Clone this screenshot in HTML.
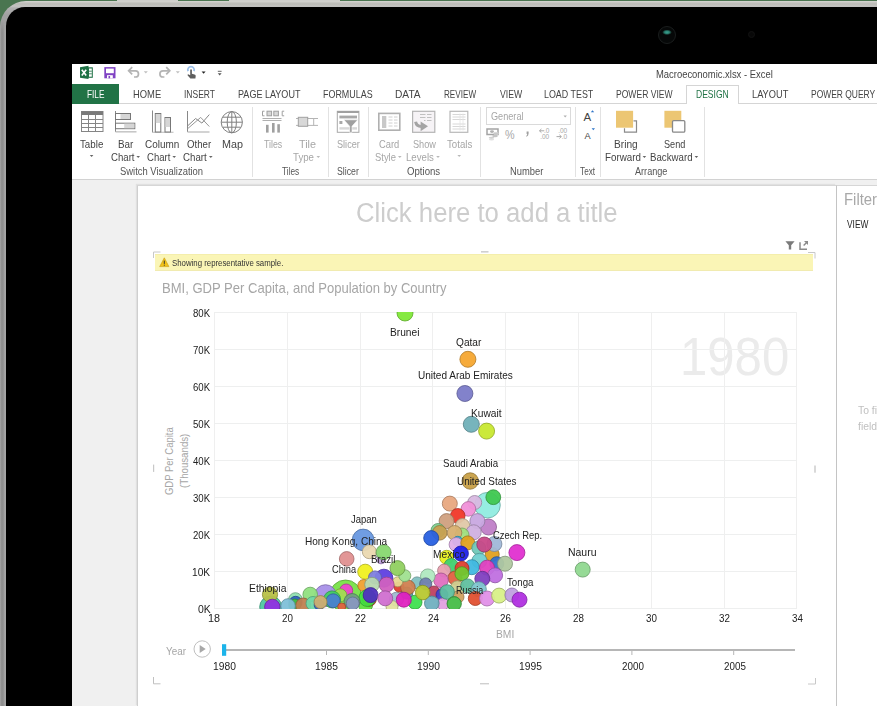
<!DOCTYPE html>
<html><head><meta charset="utf-8">
<style>
*{margin:0;padding:0;box-sizing:border-box}
html,body{width:877px;height:706px;overflow:hidden;background:#4a7550;font-family:"Liberation Sans",sans-serif}
.a{position:absolute}
.t{position:absolute;white-space:nowrap;transform-origin:0 0;font-family:"Liberation Sans",sans-serif}
#frame{left:0;top:1px;width:1000px;height:900px;border-radius:26px;background:linear-gradient(180deg,#d2d2ce 0,#d0d0cc 1px,#bebeba 2px,#bdbdb9 4px,#c6c6c4 5px,#b0b0b0 7px,#a0a0a0 14px)}
#fleft{left:0;top:20px;width:7px;height:690px;-webkit-mask-image:linear-gradient(180deg,transparent 0,#000 12px);background:linear-gradient(90deg,#a6a6a6 0,#909090 1.5px,#8e8e8e 3px,#a8a8a8 5px,#a0a0a0 6px)}
#bezel{left:6px;top:7px;width:1000px;height:900px;border-radius:19px;background:#000}
.sep{position:absolute;top:107px;width:1px;height:70px;background:#e2e2e2}
.gv{position:absolute;top:312px;width:1px;height:297px;background:#efefef}
.gh{position:absolute;left:214px;width:583px;height:1px;background:#eeefef}
.dd{position:absolute;width:0;height:0;border-left:2.5px solid transparent;border-right:2.5px solid transparent;border-top:3px solid #666}
.dd.dis{border-top-color:#b0b0b0}
.cm{position:absolute;border-color:#c8c8c8;border-style:solid;border-width:0}
</style></head>
<body>
<div id="frame" class="a"></div>
<div id="fleft" class="a"></div>
<div class="a" style="left:117px;top:0;width:61px;height:1px;background:#cfcfcc"></div>
<div class="a" style="left:229px;top:0;width:111px;height:1px;background:#cfcfcc"></div>
<div id="bezel" class="a"></div>
<div class="a" style="left:658px;top:26px;width:18px;height:18px;border-radius:50%;border:1px solid #1a1d1d;background:radial-gradient(ellipse 30% 17% at 50% 33%,#3aa090 0,#2a8070 50%,rgba(10,20,20,0) 100%),#060808"></div>
<div class="a" style="left:748px;top:31px;width:7px;height:7px;border-radius:50%;background:#080808;border:1px solid #121212"></div>

<!-- screen -->
<div class="a" style="left:72px;top:64px;width:805px;height:642px;background:#fff"></div>
<!-- FILE tab -->
<div class="a" style="left:72px;top:84px;width:47px;height:20px;background:#217346"></div>
<!-- tab bar bottom line -->
<div class="a" style="left:119px;top:103px;width:758px;height:1px;background:#d5d5d5"></div>
<!-- DESIGN tab -->
<div class="a" style="left:686px;top:85px;width:53px;height:19px;border:1px solid #d5d5d5;border-bottom:none;background:#fff"></div>
<!-- ribbon bottom -->
<div class="a" style="left:72px;top:179px;width:805px;height:1px;background:#d2d2d2"></div>
<!-- gray area -->
<div class="a" style="left:72px;top:180px;width:805px;height:526px;background:#f0f0f0"></div>
<!-- canvas -->
<div class="a" style="left:137px;top:185px;width:699px;height:521px;background:#fff;border-left:1px solid #cfcfcf;border-top:1px solid #d6d6d6;box-shadow:-1px -1px 1px #e0e0e0"></div>
<!-- filter pane -->
<div class="a" style="left:836px;top:185px;width:41px;height:521px;background:#fff;border-left:1px solid #c4c4c4;border-top:1px solid #d6d6d6"></div>

<!-- separators -->
<div class="sep" style="left:252px"></div>
<div class="sep" style="left:328px"></div>
<div class="sep" style="left:368px"></div>
<div class="sep" style="left:480px"></div>
<div class="sep" style="left:575px"></div>
<div class="sep" style="left:600px"></div>
<div class="sep" style="left:704px"></div>


<!-- yellow bar -->
<div class="a" style="left:155px;top:254px;width:658px;height:17px;background:#faf5b6;border-top:1px solid #f4eeac;border-bottom:1px solid #f1ebb0"></div>

<!-- gridlines -->
<div class='t' style='left:680.40px;top:329.55px;font-size:53px;line-height:53px;color:#ebebeb;font-weight:400;transform:scaleX(0.9259);'>1980</div>
<div class='gv' style='left:213.9px'></div>
<div class='gv' style='left:286.7px'></div>
<div class='gv' style='left:359.5px'></div>
<div class='gv' style='left:432.3px'></div>
<div class='gv' style='left:505.1px'></div>
<div class='gv' style='left:577.9px'></div>
<div class='gv' style='left:650.7px'></div>
<div class='gv' style='left:723.5px'></div>
<div class='gv' style='left:796.3px'></div>
<div class='gh' style='top:311.7px'></div>
<div class='gh' style='top:348.8px'></div>
<div class='gh' style='top:385.8px'></div>
<div class='gh' style='top:422.8px'></div>
<div class='gh' style='top:459.9px'></div>
<div class='gh' style='top:496.9px'></div>
<div class='gh' style='top:534.0px'></div>
<div class='gh' style='top:571.0px'></div>
<div class='gh' style='top:608.1px'></div>

<svg class="a" style="left:0;top:0" width="877" height="706" viewBox="0 0 877 706"><defs><clipPath id="pc"><rect x="214" y="312" width="583" height="297"/></clipPath></defs><g clip-path="url(#pc)" stroke-width="0.8">
<circle cx="345.5" cy="596.0" r="16.0" fill="#78e048" fill-opacity="0.95" stroke="#56a133"/>
<circle cx="487.5" cy="505.2" r="12.8" fill="#90ece0" fill-opacity="0.95" stroke="#67a9a1"/>
<circle cx="325.5" cy="595.7" r="11.0" fill="#a890e8" fill-opacity="0.95" stroke="#7867a7"/>
<circle cx="270.7" cy="607.0" r="11.0" fill="#50c8a0" fill-opacity="0.95" stroke="#399073"/>
<circle cx="363.1" cy="539.9" r="10.8" fill="#6898e0" fill-opacity="0.95" stroke="#4a6da1"/>
<circle cx="405.0" cy="313.0" r="8.0" fill="#80e838" fill-opacity="0.95" stroke="#5ca728"/>
<circle cx="467.9" cy="359.3" r="8.0" fill="#f5a630" fill-opacity="0.95" stroke="#b07722"/>
<circle cx="464.9" cy="393.5" r="8.0" fill="#7b7bc8" fill-opacity="0.95" stroke="#585890"/>
<circle cx="471.3" cy="424.3" r="8.0" fill="#70b0b8" fill-opacity="0.95" stroke="#507e84"/>
<circle cx="486.6" cy="431.1" r="8.0" fill="#c8e830" fill-opacity="0.95" stroke="#90a722"/>
<circle cx="470.2" cy="481.0" r="8.2" fill="#c8a048" fill-opacity="0.95" stroke="#907333"/>
<circle cx="582.7" cy="569.6" r="7.5" fill="#90d890" fill-opacity="0.95" stroke="#679b67"/>
<circle cx="493.3" cy="497.2" r="7.4" fill="#40c850" fill-opacity="0.95" stroke="#2e9039"/>
<circle cx="474.7" cy="502.5" r="7.0" fill="#d8b8e0" fill-opacity="0.95" stroke="#9b84a1"/>
<circle cx="468.4" cy="508.9" r="7.3" fill="#f090d8" fill-opacity="0.95" stroke="#ac679b"/>
<circle cx="449.8" cy="503.6" r="7.5" fill="#e8a880" fill-opacity="0.95" stroke="#a7785c"/>
<circle cx="457.7" cy="515.8" r="7.3" fill="#f03828" fill-opacity="0.95" stroke="#ac281c"/>
<circle cx="446.6" cy="521.1" r="7.5" fill="#d0a080" fill-opacity="0.95" stroke="#95735c"/>
<circle cx="488.5" cy="527.0" r="8.0" fill="#c080c8" fill-opacity="0.95" stroke="#8a5c90"/>
<circle cx="477.4" cy="521.1" r="7.5" fill="#c8a8e0" fill-opacity="0.95" stroke="#9078a1"/>
<circle cx="462.5" cy="525.9" r="7.3" fill="#e0c8a8" fill-opacity="0.95" stroke="#a19078"/>
<circle cx="473.7" cy="532.3" r="7.5" fill="#d0b0e0" fill-opacity="0.95" stroke="#957ea1"/>
<circle cx="438.0" cy="530.5" r="7.0" fill="#80d090" fill-opacity="0.95" stroke="#5c9567"/>
<circle cx="462.0" cy="535.0" r="7.0" fill="#a0e080" fill-opacity="0.95" stroke="#73a15c"/>
<circle cx="439.7" cy="532.8" r="7.3" fill="#c8a050" fill-opacity="0.95" stroke="#907339"/>
<circle cx="454.5" cy="532.8" r="7.3" fill="#d8b070" fill-opacity="0.95" stroke="#9b7e50"/>
<circle cx="431.2" cy="538.1" r="7.5" fill="#2860e0" fill-opacity="0.95" stroke="#1c45a1"/>
<circle cx="457.7" cy="541.3" r="5.0" fill="#30b0e0" fill-opacity="0.95" stroke="#227ea1"/>
<circle cx="456.1" cy="544.5" r="7.0" fill="#e0b0e8" fill-opacity="0.95" stroke="#a17ea7"/>
<circle cx="467.8" cy="542.9" r="7.0" fill="#e0a020" fill-opacity="0.95" stroke="#a17317"/>
<circle cx="492.2" cy="554.4" r="7.0" fill="#e0a020" fill-opacity="0.95" stroke="#a17317"/>
<circle cx="478.8" cy="548.0" r="7.0" fill="#70c8b8" fill-opacity="0.95" stroke="#509084"/>
<circle cx="494.4" cy="544.0" r="7.5" fill="#a0b8d8" fill-opacity="0.95" stroke="#73849b"/>
<circle cx="484.3" cy="544.5" r="7.5" fill="#c84888" fill-opacity="0.95" stroke="#903361"/>
<circle cx="516.9" cy="552.6" r="8.0" fill="#e030d0" fill-opacity="0.95" stroke="#a12295"/>
<circle cx="446.6" cy="557.3" r="7.0" fill="#e8f020" fill-opacity="0.95" stroke="#a7ac17"/>
<circle cx="460.9" cy="553.5" r="7.5" fill="#2020e8" fill-opacity="0.95" stroke="#1717a7"/>
<circle cx="479.4" cy="560.8" r="7.5" fill="#70d0d0" fill-opacity="0.95" stroke="#509595"/>
<circle cx="471.8" cy="567.2" r="7.5" fill="#40b8e0" fill-opacity="0.95" stroke="#2e84a1"/>
<circle cx="451.2" cy="565.5" r="7.0" fill="#40d070" fill-opacity="0.95" stroke="#2e9550"/>
<circle cx="444.1" cy="570.6" r="6.5" fill="#e8a0b0" fill-opacity="0.95" stroke="#a7737e"/>
<circle cx="455.0" cy="578.0" r="7.0" fill="#e06040" fill-opacity="0.95" stroke="#a1452e"/>
<circle cx="462.0" cy="568.3" r="7.0" fill="#e04030" fill-opacity="0.95" stroke="#a12e22"/>
<circle cx="461.9" cy="573.7" r="7.0" fill="#70c830" fill-opacity="0.95" stroke="#509022"/>
<circle cx="496.8" cy="563.7" r="7.0" fill="#3070d0" fill-opacity="0.95" stroke="#225095"/>
<circle cx="505.0" cy="563.7" r="7.5" fill="#b0c8a0" fill-opacity="0.95" stroke="#7e9073"/>
<circle cx="487.0" cy="567.7" r="7.5" fill="#e040c0" fill-opacity="0.95" stroke="#a12e8a"/>
<circle cx="495.1" cy="575.3" r="7.5" fill="#c070e0" fill-opacity="0.95" stroke="#8a50a1"/>
<circle cx="482.3" cy="578.8" r="7.5" fill="#8040c0" fill-opacity="0.95" stroke="#5c2e8a"/>
<circle cx="441.0" cy="580.3" r="7.3" fill="#e070c0" fill-opacity="0.95" stroke="#a1508a"/>
<circle cx="427.8" cy="576.2" r="7.3" fill="#b0e8c0" fill-opacity="0.95" stroke="#7ea78a"/>
<circle cx="417.0" cy="582.9" r="6.0" fill="#80c0c0" fill-opacity="0.95" stroke="#5c8a8a"/>
<circle cx="425.7" cy="583.9" r="6.0" fill="#7080b0" fill-opacity="0.95" stroke="#505c7e"/>
<circle cx="433.9" cy="592.0" r="6.0" fill="#c04060" fill-opacity="0.95" stroke="#8a2e45"/>
<circle cx="442.0" cy="594.6" r="6.0" fill="#4040d0" fill-opacity="0.95" stroke="#2e2e95"/>
<circle cx="457.4" cy="587.8" r="7.0" fill="#d0d090" fill-opacity="0.95" stroke="#959567"/>
<circle cx="467.6" cy="585.9" r="7.0" fill="#60c0a0" fill-opacity="0.95" stroke="#458a73"/>
<circle cx="443.0" cy="604.0" r="6.0" fill="#e0a0e0" fill-opacity="0.95" stroke="#a173a1"/>
<circle cx="458.0" cy="597.0" r="6.0" fill="#d0a060" fill-opacity="0.95" stroke="#957345"/>
<circle cx="447.1" cy="592.0" r="7.3" fill="#60c0a0" fill-opacity="0.95" stroke="#458a73"/>
<circle cx="478.8" cy="589.2" r="7.5" fill="#80c8d0" fill-opacity="0.95" stroke="#5c9095"/>
<circle cx="475.3" cy="598.5" r="7.0" fill="#e05030" fill-opacity="0.95" stroke="#a13922"/>
<circle cx="487.0" cy="598.5" r="7.5" fill="#e090e8" fill-opacity="0.95" stroke="#a167a7"/>
<circle cx="499.1" cy="595.6" r="7.5" fill="#d8f088" fill-opacity="0.95" stroke="#9bac61"/>
<circle cx="511.9" cy="595.0" r="7.0" fill="#c0a0e0" fill-opacity="0.95" stroke="#8a73a1"/>
<circle cx="519.5" cy="599.7" r="7.5" fill="#b030e0" fill-opacity="0.95" stroke="#7e22a1"/>
<circle cx="454.0" cy="603.6" r="7.0" fill="#40c060" fill-opacity="0.95" stroke="#2e8a45"/>
<circle cx="454.3" cy="603.8" r="7.0" fill="#50c050" fill-opacity="0.95" stroke="#398a39"/>
<circle cx="431.8" cy="603.3" r="7.3" fill="#70b0c0" fill-opacity="0.95" stroke="#507e8a"/>
<circle cx="415.0" cy="602.2" r="7.0" fill="#40e050" fill-opacity="0.95" stroke="#2ea139"/>
<circle cx="396.6" cy="599.2" r="7.0" fill="#a0b8d0" fill-opacity="0.95" stroke="#738495"/>
<circle cx="392.0" cy="606.5" r="6.0" fill="#e0e0a0" fill-opacity="0.95" stroke="#a1a173"/>
<circle cx="406.8" cy="593.0" r="6.0" fill="#50a0a8" fill-opacity="0.95" stroke="#397378"/>
<circle cx="422.7" cy="592.6" r="7.3" fill="#b8c830" fill-opacity="0.95" stroke="#849022"/>
<circle cx="399.0" cy="587.0" r="5.0" fill="#e04030" fill-opacity="0.95" stroke="#a12e22"/>
<circle cx="407.9" cy="587.4" r="7.3" fill="#d08050" fill-opacity="0.95" stroke="#955c39"/>
<circle cx="397.7" cy="581.8" r="5.0" fill="#e8d890" fill-opacity="0.95" stroke="#a79b67"/>
<circle cx="404.8" cy="575.7" r="6.0" fill="#a0e090" fill-opacity="0.95" stroke="#73a167"/>
<circle cx="397.5" cy="568.1" r="7.5" fill="#90d060" fill-opacity="0.95" stroke="#679545"/>
<circle cx="369.3" cy="551.7" r="7.0" fill="#ead8b0" fill-opacity="0.95" stroke="#a89b7e"/>
<circle cx="381.0" cy="559.9" r="4.0" fill="#c0a0e0" fill-opacity="0.95" stroke="#8a73a1"/>
<circle cx="383.6" cy="552.2" r="7.5" fill="#88d870" fill-opacity="0.95" stroke="#619b50"/>
<circle cx="346.7" cy="558.9" r="7.3" fill="#e09090" fill-opacity="0.95" stroke="#a16767"/>
<circle cx="365.2" cy="571.7" r="7.5" fill="#f0f020" fill-opacity="0.95" stroke="#acac17"/>
<circle cx="383.9" cy="578.2" r="9.0" fill="#6040e0" fill-opacity="0.95" stroke="#452ea1"/>
<circle cx="375.0" cy="577.4" r="6.5" fill="#8080e0" fill-opacity="0.95" stroke="#5c5ca1"/>
<circle cx="386.6" cy="584.6" r="7.5" fill="#d060c0" fill-opacity="0.95" stroke="#95458a"/>
<circle cx="363.8" cy="585.5" r="6.0" fill="#f0a030" fill-opacity="0.95" stroke="#ac7322"/>
<circle cx="372.0" cy="584.6" r="7.3" fill="#b8d8b0" fill-opacity="0.95" stroke="#849b7e"/>
<circle cx="365.6" cy="605.0" r="7.0" fill="#60e040" fill-opacity="0.95" stroke="#45a12e"/>
<circle cx="369.3" cy="599.2" r="7.0" fill="#e03030" fill-opacity="0.95" stroke="#a12222"/>
<circle cx="367.4" cy="598.0" r="8.5" fill="#40e040" fill-opacity="0.95" stroke="#2ea12e"/>
<circle cx="370.6" cy="595.1" r="7.5" fill="#5030c0" fill-opacity="0.95" stroke="#39228a"/>
<circle cx="385.2" cy="598.3" r="7.5" fill="#d070d0" fill-opacity="0.95" stroke="#955095"/>
<circle cx="346.2" cy="590.5" r="6.5" fill="#f040d0" fill-opacity="0.95" stroke="#ac2e95"/>
<circle cx="340.4" cy="595.3" r="6.5" fill="#a0e050" fill-opacity="0.95" stroke="#73a139"/>
<circle cx="332.1" cy="599.4" r="8.5" fill="#40d060" fill-opacity="0.95" stroke="#2e9545"/>
<circle cx="333.2" cy="600.8" r="7.0" fill="#4a80d0" fill-opacity="0.95" stroke="#355c95"/>
<circle cx="352.0" cy="601.5" r="8.0" fill="#70a080" fill-opacity="0.95" stroke="#50735c"/>
<circle cx="352.7" cy="603.5" r="6.5" fill="#8898c0" fill-opacity="0.95" stroke="#616d8a"/>
<circle cx="341.7" cy="606.9" r="4.0" fill="#e06040" fill-opacity="0.95" stroke="#a1452e"/>
<circle cx="310.2" cy="594.5" r="7.3" fill="#90e080" fill-opacity="0.95" stroke="#67a15c"/>
<circle cx="295.4" cy="599.5" r="6.8" fill="#90e0b0" fill-opacity="0.95" stroke="#67a17e"/>
<circle cx="295.6" cy="602.8" r="6.5" fill="#3060c0" fill-opacity="0.95" stroke="#22458a"/>
<circle cx="294.7" cy="605.0" r="6.0" fill="#40c040" fill-opacity="0.95" stroke="#2e8a2e"/>
<circle cx="303.2" cy="605.5" r="7.5" fill="#c08050" fill-opacity="0.95" stroke="#8a5c39"/>
<circle cx="313.0" cy="603.5" r="7.0" fill="#70d8a8" fill-opacity="0.95" stroke="#509b78"/>
<circle cx="319.2" cy="605.0" r="5.0" fill="#3060d0" fill-opacity="0.95" stroke="#224595"/>
<circle cx="320.5" cy="602.1" r="6.5" fill="#d0b070" fill-opacity="0.95" stroke="#957e50"/>
<circle cx="288.0" cy="606.0" r="7.3" fill="#80c0d8" fill-opacity="0.95" stroke="#5c8a9b"/>
<circle cx="270.0" cy="594.6" r="7.6" fill="#b8c048" fill-opacity="0.95" stroke="#848a33"/>
<circle cx="272.3" cy="606.9" r="7.7" fill="#9030e0" fill-opacity="0.95" stroke="#6722a1"/>
<circle cx="403.8" cy="599.7" r="7.5" fill="#e020c0" fill-opacity="0.95" stroke="#a1178a"/>
</g></svg>
<svg class="a" style="left:0;top:0" width="877" height="706" viewBox="0 0 877 706">
<!-- excel logo -->
<path d="M80 67.2 L88.5 65.8 L88.5 79 L80 77.8 Z" fill="#1e7145"/>
<rect x="88" y="67.3" width="4.8" height="10.5" fill="#1e7145"/>
<rect x="89" y="68.5" width="2.8" height="8.2" fill="#fff"/>
<path d="M89 71.2h2.8M89 73.8h2.8" stroke="#1e7145" stroke-width="0.8"/>
<path d="M81.8 69.8 L86.2 75.6 M86.2 69.8 L81.8 75.6" stroke="#fff" stroke-width="1.6"/>
<!-- save -->
<rect x="104.3" y="67.1" width="11.2" height="11.2" fill="#8043c4"/>
<rect x="106" y="68.6" width="7.8" height="4.6" fill="#fff"/>
<rect x="107" y="75.2" width="5.8" height="3.1" fill="#fff"/>
<rect x="108.5" y="76" width="1.6" height="2.3" fill="#8043c4"/>
<!-- undo -->
<path d="M129 70.8 H135.4 A3.1 3.1 0 0 1 135.4 77 H134" fill="none" stroke="#b4b4b4" stroke-width="1.7"/>
<path d="M132.2 67.2 L128.6 70.8 L132.2 74.4" fill="none" stroke="#b4b4b4" stroke-width="1.7"/>
<path d="M143.8 71.2h4l-2 2.2z" fill="#c0c0c0"/>
<!-- redo -->
<path d="M169.4 70.8 H163 A3.1 3.1 0 0 0 163 77 H164.4" fill="none" stroke="#b4b4b4" stroke-width="1.7"/>
<path d="M166.2 67.2 L169.8 70.8 L166.2 74.4" fill="none" stroke="#b4b4b4" stroke-width="1.7"/>
<path d="M175.8 71.2h4l-2 2.2z" fill="#c0c0c0"/>
<!-- touch -->
<path d="M188.1 71.2 A3.2 3.2 0 1 1 193.9 71.2" fill="none" stroke="#9cc0ea" stroke-width="1.8"/>
<path d="M190.2 69.6 h1.7 v4.2 l2.6 0.7 q1.3 0.4 1.2 1.6 l-0.3 2.5 h-5 l-2.7 -3.2 q-0.5 -0.8 0.4 -1.1 l2.1 0.9 z" fill="#5e5e5e"/>
<path d="M201.6 71.4h4l-2 2.4z" fill="#222"/>
<!-- customize -->
<path d="M217.8 71.3h3.8" stroke="#555" stroke-width="0.9"/>
<path d="M217.8 73.2h3.8l-1.9 2.3z" fill="#555"/>

<!-- Table icon -->
<g stroke="#858585" stroke-width="1" fill="none">
<rect x="81.5" y="111.5" width="21.5" height="20"/>
<path d="M81.5 119.5h21.5M81.5 123.5h21.5M81.5 127.5h21.5M88.5 115v16.5M95.5 115v16.5"/>
</g>
<rect x="81.5" y="111.5" width="21.5" height="3.5" fill="#7a7a7a"/>
<!-- Bar chart icon -->
<path d="M115.5 111v21" stroke="#888" stroke-width="1"/>
<path d="M115.5 131.8h21" stroke="#c4c4c4" stroke-width="1.5"/>
<rect x="115.5" y="113.5" width="15" height="6" fill="#fff" stroke="#777"/>
<rect x="120.5" y="114" width="9.5" height="5" fill="#d6d6d6"/>
<rect x="115.5" y="123.2" width="19.3" height="5.5" fill="#fff" stroke="#777"/>
<rect x="124.2" y="123.7" width="10.1" height="4.5" fill="#d6d6d6"/>
<!-- Column icon -->
<path d="M152.5 110.5v22" stroke="#888" stroke-width="1"/>
<path d="M152.5 132.3h21" stroke="#c4c4c4" stroke-width="1.2"/>
<rect x="155.3" y="113.5" width="5.5" height="18.5" fill="#fff" stroke="#777"/>
<rect x="155.8" y="114" width="4.5" height="9" fill="#d6d6d6"/>
<rect x="165" y="117.5" width="5.5" height="14.5" fill="#fff" stroke="#777"/>
<rect x="165.5" y="118" width="4.5" height="9" fill="#d6d6d6"/>
<!-- Other chart icon -->
<path d="M187.5 111v21" stroke="#888" stroke-width="1"/>
<path d="M187.5 132h22" stroke="#c4c4c4" stroke-width="1.5"/>
<path d="M187.5 126L195.6 118.5L201.9 123.1L209.3 114.6" fill="none" stroke="#888" stroke-width="1"/>
<path d="M187.5 128.8L200.7 117.4L209.3 126.5" fill="none" stroke="#999" stroke-width="1"/>
<!-- Map icon -->
<g fill="none" stroke="#808080" stroke-width="1">
<circle cx="231.8" cy="122.2" r="10.6"/>
<ellipse cx="231.8" cy="122.2" rx="4.6" ry="10.6"/>
<path d="M221.2 122.2h21.2M222.8 117.2h18M222.8 127.2h18M231.8 111.6v21.2"/>
</g>
<!-- Tiles icon -->
<g fill="#d8d8d8" stroke="#a0a0a0" stroke-width="1">
<path d="M264.5 111.2h-2v4.6h2" fill="none"/>
<rect x="267" y="111.2" width="4.6" height="4.6"/>
<rect x="273.8" y="111.2" width="4.6" height="4.6"/>
<path d="M284.2 111.2h-2v4.6h2" fill="none"/>
<path d="M262.5 118.5h19M262.5 120.5h19" stroke="#b0b0b0"/>
</g>
<rect x="266" y="124.8" width="2.6" height="7.8" fill="#a0a0a0"/>
<rect x="272" y="123" width="2.6" height="9.6" fill="#a0a0a0"/>
<rect x="277.3" y="124.2" width="2.6" height="8.4" fill="#a0a0a0"/>
<!-- Tile type icon -->
<path d="M296 118.5h22M296 125.4h22M313.7 118.5v7" stroke="#b4b4b4" stroke-width="1"/>
<rect x="298.3" y="117.3" width="9.4" height="9" fill="#d8d8d8" stroke="#a0a0a0"/>
<!-- Slicer icon -->
<rect x="337.3" y="111.3" width="21.6" height="21" fill="#fff" stroke="#a8a8a8"/>
<rect x="337.3" y="111" width="21.6" height="2" fill="#a0a0a0"/>
<rect x="339.4" y="115.6" width="17.6" height="2.8" fill="#a8a8a8"/>
<rect x="339.4" y="121" width="3" height="3" fill="#a8a8a8"/>
<rect x="339.4" y="127.2" width="17.6" height="2.4" fill="#d8d8d8"/>
<path d="M343.8 119.8h14l-5.8 6.4v6.2h-2.4v-6.2z" fill="#a0a0a0" stroke="#fff" stroke-width="0.6"/>
<!-- Card style icon -->
<rect x="378.8" y="113.4" width="21" height="16.8" fill="#fff" stroke="#b0b0b0" stroke-width="1.6"/>
<rect x="382" y="116" width="4.3" height="12" fill="#c8c8c8"/>
<path d="M388.5 117h4M394 117h3.5M388.5 120h4M394 120h3.5M388.5 123h4M394 123h3.5M388.5 126h4M394 126h3.5" stroke="#c4c4c4" stroke-width="0.8"/>
<!-- Show levels icon -->
<rect x="412.6" y="111.3" width="22.2" height="21" fill="#f6f3f6" stroke="#b4b4b4" stroke-width="1.2"/>
<path d="M420 114.5h5.5M427 114.5h4.5M420 117.5h5.5M427 117.5h4.5M424 120.5h1.5M427 120.5h4.5" stroke="#c0c0c0" stroke-width="1"/>
<path d="M415.6 121.8 q0.8 4.6 5.8 4.6 h1" fill="none" stroke="#a4a4a4" stroke-width="3"/>
<path d="M420.6 121.4 l7.4 4.9 l-7.4 4.9z" fill="#a4a4a4"/>
<!-- Totals icon -->
<rect x="450" y="111.3" width="17.8" height="21" fill="#fff" stroke="#b8b8b8" stroke-width="1.2"/>
<path d="M452.5 114.5h13M452.5 117h13M452.5 119.5h13M452.5 124h13M452.5 126.5h13M452.5 129h13" stroke="#d4d4d4" stroke-width="0.9"/>
<path d="M460 113.5v17M463 113.5v17" stroke="#e4e4e4" stroke-width="0.8"/>
<!-- General dropdown -->
<rect x="486.5" y="107.5" width="84" height="17" fill="#fff" stroke="#dadada"/>
<path d="M563.5 115.5h3.4l-1.7 2z" fill="#b0b0b0"/>
<!-- number format icons -->
<rect x="487" y="129" width="11" height="5.5" fill="#fff" stroke="#a4a4a4" stroke-width="1.5"/>
<ellipse cx="492" cy="131.6" rx="2" ry="1.4" fill="#b0b0b0"/>
<ellipse cx="496" cy="133.5" rx="2.6" ry="1.2" fill="#c8c8c8" stroke="#d8d8d8" stroke-width="0.5"/>
<ellipse cx="495" cy="136" rx="2.8" ry="1.2" fill="#c4c4c4"/>
<ellipse cx="491.5" cy="137.8" rx="2.8" ry="1.1" fill="#d0d0d0"/>
<ellipse cx="491.5" cy="139.6" rx="2.6" ry="1" fill="#e0e0e0"/>
<text x="505" y="138.6" font-family="Liberation Sans" font-size="12" fill="#a8a8a8" transform="translate(505 138.6) scale(0.9 1) translate(-505 -138.6)">%</text>
<path d="M526.6 131.4h2v2.2q0 2.4-2 3.2l-0.5-0.7q1.1-0.6 1.1-2h-0.6z" fill="#a0a0a0"/>
<path d="M539.5 130.8h4.8M541.4 129l-1.9 1.8 1.9 1.8" fill="none" stroke="#a8a8a8" stroke-width="1"/>
<text x="544" y="133" font-family="Liberation Sans" font-size="6.5" fill="#a8a8a8">.0</text>
<text x="540.2" y="138.8" font-family="Liberation Sans" font-size="6.5" fill="#a8a8a8">.00</text>
<text x="558.2" y="133" font-family="Liberation Sans" font-size="6.5" fill="#a8a8a8">.00</text>
<path d="M556.5 136.6h4.8M559.4 134.8l1.9 1.8-1.9 1.8" fill="none" stroke="#a8a8a8" stroke-width="1"/>
<text x="561.8" y="138.8" font-family="Liberation Sans" font-size="6.5" fill="#a8a8a8">.0</text>
<!-- font size A icons -->
<text x="583.6" y="120.6" font-family="Liberation Sans" font-size="11.5" fill="#444">A</text>
<path d="M590.8 112.2h3.4l-1.7-2z" fill="#2e75c8"/>
<text x="584.6" y="139" font-family="Liberation Sans" font-size="9.2" fill="#444">A</text>
<path d="M591.6 128.2h3.4l-1.7 2z" fill="#2e75c8"/>
<!-- bring forward -->
<path d="M633.5 120.8h3v11.4h-12v-4" fill="none" stroke="#8a8a8a" stroke-width="1.2"/>
<rect x="616" y="110.8" width="17.1" height="16.9" fill="#ecc673"/>
<!-- send backward -->
<rect x="664.4" y="110.8" width="16.9" height="16.9" fill="#ecc673"/>
<rect x="672.5" y="120.6" width="12.3" height="11.6" rx="1.2" fill="#fff" stroke="#888" stroke-width="1.3"/>

<!-- dropdown arrows -->
<path d="M89.8 155h3.6l-1.8 2z" fill="#666"/>
<path d="M136.4 156h3.6l-1.8 2z" fill="#666"/>
<path d="M172.4 156h3.6l-1.8 2z" fill="#666"/>
<path d="M209 156h3.6l-1.8 2z" fill="#666"/>
<path d="M316.5 156h3.6l-1.8 2z" fill="#b8b8b8"/>
<path d="M398 156h3.6l-1.8 2z" fill="#b8b8b8"/>
<path d="M436.2 156h3.6l-1.8 2z" fill="#b8b8b8"/>
<path d="M457.4 155h3.6l-1.8 2z" fill="#b8b8b8"/>
<path d="M642.6 156h3.6l-1.8 2z" fill="#666"/>
<path d="M694.6 156h3.6l-1.8 2z" fill="#666"/>

<!-- canvas corner marks & handles -->
<path d="M153.5 258v-6h7" fill="none" stroke="#c8c8c8" stroke-width="1"/>
<path d="M808 252.5h7v6" fill="none" stroke="#c8c8c8" stroke-width="1"/>
<path d="M153.5 677v6.8h7" fill="none" stroke="#c0c0c0" stroke-width="1"/>
<path d="M808 684h7.5v-6" fill="none" stroke="#c8c8c8" stroke-width="1"/>
<rect x="481" y="251" width="7.5" height="1.6" fill="#d0d0d0"/>
<rect x="480" y="683" width="9" height="1.4" fill="#d0d0d0"/>
<rect x="153" y="464.6" width="1.2" height="7.3" fill="#c8c8c8"/>
<rect x="814.2" y="465.5" width="1.6" height="7.2" fill="#d0d0d0"/>
<!-- filter + popout icons -->
<path d="M785.4 241.2h9.2l-3.4 4v4.2h-2.4v-4.2z" fill="#7a7a7a"/>
<path d="M800 242.2v7h7" fill="none" stroke="#8a8a8a" stroke-width="1.5"/>
<path d="M803.6 245.6l4-4" fill="none" stroke="#8a8a8a" stroke-width="1.4"/>
<path d="M804 241.1h4v4z" fill="#8a8a8a"/>
<!-- warning icon -->
<path d="M164.3 257.8l4.6 8.8h-9.2z" fill="#f2c318" stroke="#c89a10" stroke-width="0.6"/>
<path d="M164.3 260.6v3.3M164.3 264.7v1" stroke="#333" stroke-width="1"/>

<!-- slider -->
<path d="M223 650h572" stroke="#b6b6b6" stroke-width="2"/>
<path d="M326.5 651v4M428.3 651v4M530.1 651v4M631.9 651v4M733.7 651v4" stroke="#b6b6b6" stroke-width="1"/>
<rect x="222" y="644.2" width="4.2" height="11.6" fill="#1cb4ea"/>
<circle cx="202.2" cy="649" r="8.2" fill="#fff" stroke="#c0c0c0" stroke-width="1"/>
<path d="M199.7 645v8l6-4z" fill="#a8a8a8"/>
</svg>


<div class='t' style='left:655.94px;top:68.95px;font-size:11px;line-height:11px;color:#444;font-weight:400;transform:scaleX(0.8563);'>Macroeconomic.xlsx - Excel</div>
<div class='t' style='left:86.95px;top:89.35px;font-size:11px;line-height:11px;color:#fff;font-weight:400;transform:scaleX(0.7500);'>FILE</div>
<div class='t' style='left:132.95px;top:89.35px;font-size:11px;line-height:11px;color:#444;font-weight:400;transform:scaleX(0.8531);'>HOME</div>
<div class='t' style='left:183.53px;top:89.35px;font-size:11px;line-height:11px;color:#444;font-weight:400;transform:scaleX(0.7718);'>INSERT</div>
<div class='t' style='left:237.98px;top:89.35px;font-size:11px;line-height:11px;color:#444;font-weight:400;transform:scaleX(0.8213);'>PAGE LAYOUT</div>
<div class='t' style='left:323.49px;top:89.35px;font-size:11px;line-height:11px;color:#444;font-weight:400;transform:scaleX(0.8117);'>FORMULAS</div>
<div class='t' style='left:395.07px;top:89.35px;font-size:11px;line-height:11px;color:#444;font-weight:400;transform:scaleX(0.9259);'>DATA</div>
<div class='t' style='left:444.06px;top:89.35px;font-size:11px;line-height:11px;color:#444;font-weight:400;transform:scaleX(0.7395);'>REVIEW</div>
<div class='t' style='left:499.70px;top:89.35px;font-size:11px;line-height:11px;color:#444;font-weight:400;transform:scaleX(0.7893);'>VIEW</div>
<div class='t' style='left:544.39px;top:89.35px;font-size:11px;line-height:11px;color:#444;font-weight:400;transform:scaleX(0.8083);'>LOAD TEST</div>
<div class='t' style='left:616.22px;top:89.35px;font-size:11px;line-height:11px;color:#444;font-weight:400;transform:scaleX(0.7778);'>POWER VIEW</div>
<div class='t' style='left:751.76px;top:89.35px;font-size:11px;line-height:11px;color:#444;font-weight:400;transform:scaleX(0.8405);'>LAYOUT</div>
<div class='t' style='left:811.23px;top:89.35px;font-size:11px;line-height:11px;color:#444;font-weight:400;transform:scaleX(0.7683);'>POWER QUERY</div>
<div class='t' style='left:695.72px;top:89.35px;font-size:11px;line-height:11px;color:#217346;font-weight:400;transform:scaleX(0.7756);'>DESIGN</div>
<div class='t' style='left:80.40px;top:138.57px;font-size:10.5px;line-height:10.5px;color:#444;font-weight:400;transform:scaleX(0.9280);'>Table</div>
<div class='t' style='left:117.76px;top:138.57px;font-size:10.5px;line-height:10.5px;color:#444;font-weight:400;transform:scaleX(0.9400);'>Bar</div>
<div class='t' style='left:110.70px;top:151.57px;font-size:10.5px;line-height:10.5px;color:#444;font-weight:400;transform:scaleX(0.9154);'>Chart</div>
<div class='t' style='left:144.70px;top:138.57px;font-size:10.5px;line-height:10.5px;color:#444;font-weight:400;transform:scaleX(0.9472);'>Column</div>
<div class='t' style='left:146.90px;top:151.57px;font-size:10.5px;line-height:10.5px;color:#444;font-weight:400;transform:scaleX(0.9077);'>Chart</div>
<div class='t' style='left:186.50px;top:138.57px;font-size:10.5px;line-height:10.5px;color:#444;font-weight:400;transform:scaleX(0.9192);'>Other</div>
<div class='t' style='left:183.00px;top:151.57px;font-size:10.5px;line-height:10.5px;color:#444;font-weight:400;transform:scaleX(0.9231);'>Chart</div>
<div class='t' style='left:221.67px;top:138.57px;font-size:10.5px;line-height:10.5px;color:#444;font-weight:400;transform:scaleX(1.0263);'>Map</div>
<div class='t' style='left:120.30px;top:167.10px;font-size:10px;line-height:10px;color:#555;font-weight:400;transform:scaleX(0.9420);'>Switch Visualization</div>
<div class='t' style='left:264.40px;top:138.57px;font-size:10.5px;line-height:10.5px;color:#a6a6a6;font-weight:400;transform:scaleX(0.8364);'>Tiles</div>
<div class='t' style='left:298.50px;top:138.57px;font-size:10.5px;line-height:10.5px;color:#a6a6a6;font-weight:400;transform:scaleX(1.0294);'>Tile</div>
<div class='t' style='left:293.30px;top:151.57px;font-size:10.5px;line-height:10.5px;color:#a6a6a6;font-weight:400;transform:scaleX(0.9217);'>Type</div>
<div class='t' style='left:281.50px;top:167.10px;font-size:10px;line-height:10px;color:#555;font-weight:400;transform:scaleX(0.8333);'>Tiles</div>
<div class='t' style='left:337.00px;top:138.57px;font-size:10.5px;line-height:10.5px;color:#a6a6a6;font-weight:400;transform:scaleX(0.8692);'>Slicer</div>
<div class='t' style='left:337.00px;top:167.10px;font-size:10px;line-height:10px;color:#555;font-weight:400;transform:scaleX(0.8720);'>Slicer</div>
<div class='t' style='left:378.50px;top:138.57px;font-size:10.5px;line-height:10.5px;color:#a6a6a6;font-weight:400;transform:scaleX(0.8913);'>Card</div>
<div class='t' style='left:375.40px;top:151.57px;font-size:10.5px;line-height:10.5px;color:#a6a6a6;font-weight:400;transform:scaleX(0.8957);'>Style</div>
<div class='t' style='left:412.60px;top:138.57px;font-size:10.5px;line-height:10.5px;color:#a6a6a6;font-weight:400;transform:scaleX(0.8741);'>Show</div>
<div class='t' style='left:406.48px;top:151.57px;font-size:10.5px;line-height:10.5px;color:#a6a6a6;font-weight:400;transform:scaleX(0.9172);'>Levels</div>
<div class='t' style='left:446.70px;top:138.57px;font-size:10.5px;line-height:10.5px;color:#a6a6a6;font-weight:400;transform:scaleX(0.9222);'>Totals</div>
<div class='t' style='left:407.40px;top:167.10px;font-size:10px;line-height:10px;color:#555;font-weight:400;transform:scaleX(0.9618);'>Options</div>
<div class='t' style='left:490.50px;top:111.08px;font-size:10.5px;line-height:10.5px;color:#a6a6a6;font-weight:400;transform:scaleX(0.8703);'>General</div>
<div class='t' style='left:510.36px;top:167.10px;font-size:10px;line-height:10px;color:#555;font-weight:400;transform:scaleX(0.9371);'>Number</div>
<div class='t' style='left:579.70px;top:167.10px;font-size:10px;line-height:10px;color:#555;font-weight:400;transform:scaleX(0.8263);'>Text</div>
<div class='t' style='left:614.43px;top:138.57px;font-size:10.5px;line-height:10.5px;color:#444;font-weight:400;transform:scaleX(0.9652);'>Bring</div>
<div class='t' style='left:605.07px;top:151.57px;font-size:10.5px;line-height:10.5px;color:#444;font-weight:400;transform:scaleX(0.9324);'>Forward</div>
<div class='t' style='left:664.40px;top:138.57px;font-size:10.5px;line-height:10.5px;color:#444;font-weight:400;transform:scaleX(0.8667);'>Send</div>
<div class='t' style='left:650.08px;top:151.57px;font-size:10.5px;line-height:10.5px;color:#444;font-weight:400;transform:scaleX(0.9222);'>Backward</div>
<div class='t' style='left:635.30px;top:167.10px;font-size:10px;line-height:10px;color:#555;font-weight:400;transform:scaleX(0.9111);'>Arrange</div>
<div class='t' style='left:356.15px;top:199.55px;font-size:27px;line-height:27px;color:#cdcdcd;font-weight:400;transform:scaleX(0.9524);'>Click here to add a title</div>
<div class='t' style='left:171.90px;top:258.12px;font-size:9.5px;line-height:9.5px;color:#333;font-weight:400;transform:scaleX(0.8237);'>Showing representative sample.</div>
<div class='t' style='left:162.30px;top:281.07px;font-size:14.5px;line-height:14.5px;color:#a6a6a6;font-weight:400;transform:scaleX(0.8991);'>BMI, GDP Per Capita, and Population by Country</div>
<div class='t' style='left:192.80px;top:308.50px;font-size:10px;line-height:10px;color:#222;font-weight:400;transform:scaleX(0.9611);'>80K</div>
<div class='t' style='left:192.80px;top:345.55px;font-size:10px;line-height:10px;color:#222;font-weight:400;transform:scaleX(0.9611);'>70K</div>
<div class='t' style='left:192.80px;top:382.60px;font-size:10px;line-height:10px;color:#222;font-weight:400;transform:scaleX(0.9611);'>60K</div>
<div class='t' style='left:192.80px;top:419.65px;font-size:10px;line-height:10px;color:#222;font-weight:400;transform:scaleX(0.9611);'>50K</div>
<div class='t' style='left:192.80px;top:456.70px;font-size:10px;line-height:10px;color:#222;font-weight:400;transform:scaleX(0.9611);'>40K</div>
<div class='t' style='left:192.80px;top:493.75px;font-size:10px;line-height:10px;color:#222;font-weight:400;transform:scaleX(0.9611);'>30K</div>
<div class='t' style='left:192.80px;top:530.80px;font-size:10px;line-height:10px;color:#222;font-weight:400;transform:scaleX(0.9611);'>20K</div>
<div class='t' style='left:191.78px;top:567.85px;font-size:10px;line-height:10px;color:#222;font-weight:400;transform:scaleX(1.0176);'>10K</div>
<div class='t' style='left:197.60px;top:604.90px;font-size:10px;line-height:10px;color:#222;font-weight:400;transform:scaleX(1.0417);'>0K</div>
<div class='t' style='left:208.12px;top:614.30px;font-size:10px;line-height:10px;color:#222;font-weight:400;transform:scaleX(1.0800);'>18</div>
<div class='t' style='left:282.00px;top:614.30px;font-size:10px;line-height:10px;color:#222;font-weight:400;transform:scaleX(0.9818);'>20</div>
<div class='t' style='left:354.80px;top:614.30px;font-size:10px;line-height:10px;color:#222;font-weight:400;transform:scaleX(0.9818);'>22</div>
<div class='t' style='left:427.60px;top:614.30px;font-size:10px;line-height:10px;color:#222;font-weight:400;transform:scaleX(0.9818);'>24</div>
<div class='t' style='left:500.40px;top:614.30px;font-size:10px;line-height:10px;color:#222;font-weight:400;transform:scaleX(0.9818);'>26</div>
<div class='t' style='left:573.20px;top:614.30px;font-size:10px;line-height:10px;color:#222;font-weight:400;transform:scaleX(0.9818);'>28</div>
<div class='t' style='left:646.00px;top:614.30px;font-size:10px;line-height:10px;color:#222;font-weight:400;transform:scaleX(0.9818);'>30</div>
<div class='t' style='left:718.80px;top:614.30px;font-size:10px;line-height:10px;color:#222;font-weight:400;transform:scaleX(0.9818);'>32</div>
<div class='t' style='left:791.60px;top:614.30px;font-size:10px;line-height:10px;color:#222;font-weight:400;transform:scaleX(0.9818);'>34</div>
<div class='t' style='left:495.78px;top:629.60px;font-size:10px;line-height:10px;color:#a6a6a6;font-weight:400;transform:scaleX(1.0250);'>BMI</div>
<div class='t' style='left:165.20px;top:494.90px;font-size:10px;line-height:10px;color:#a6a6a6;transform:rotate(-90deg) scaleX(0.9472)'>GDP Per Capita</div>
<div class='t' style='left:180.00px;top:487.50px;font-size:10px;line-height:10px;color:#a6a6a6;transform:rotate(-90deg) scaleX(0.9679)'>(Thousands)</div>
<div class='t' style='left:166.40px;top:645.95px;font-size:11px;line-height:11px;color:#a6a6a6;font-weight:400;transform:scaleX(0.9000);'>Year</div>
<div class='t' style='left:213.47px;top:661.50px;font-size:10px;line-height:10px;color:#222;font-weight:400;transform:scaleX(1.0286);'>1980</div>
<div class='t' style='left:315.27px;top:661.50px;font-size:10px;line-height:10px;color:#222;font-weight:400;transform:scaleX(1.0286);'>1985</div>
<div class='t' style='left:417.07px;top:661.50px;font-size:10px;line-height:10px;color:#222;font-weight:400;transform:scaleX(1.0286);'>1990</div>
<div class='t' style='left:518.87px;top:661.50px;font-size:10px;line-height:10px;color:#222;font-weight:400;transform:scaleX(1.0286);'>1995</div>
<div class='t' style='left:621.70px;top:661.50px;font-size:10px;line-height:10px;color:#222;font-weight:400;transform:scaleX(0.9818);'>2000</div>
<div class='t' style='left:723.50px;top:661.50px;font-size:10px;line-height:10px;color:#222;font-weight:400;transform:scaleX(0.9818);'>2005</div>
<div class='t' style='left:843.67px;top:192.20px;font-size:16px;line-height:16px;color:#a8a8a8;font-weight:400;transform:scaleX(0.9300);'>Filters</div>
<div class='t' style='left:847.00px;top:219.50px;font-size:10px;line-height:10px;color:#222;font-weight:400;transform:scaleX(0.8346);'>VIEW</div>
<div class='t' style='left:858.00px;top:405.12px;font-size:11.5px;line-height:11.5px;color:#c0c0c0;font-weight:400;transform:scaleX(0.9000);'>To fi</div>
<div class='t' style='left:858.00px;top:421.23px;font-size:11.5px;line-height:11.5px;color:#c0c0c0;font-weight:400;transform:scaleX(0.9000);'>field</div>
<div class='t' style='left:390.23px;top:327.07px;font-size:10.5px;line-height:10.5px;color:#222;font-weight:400;transform:scaleX(0.9690);'>Brunei</div>
<div class='t' style='left:455.80px;top:336.68px;font-size:10.5px;line-height:10.5px;color:#222;font-weight:400;transform:scaleX(0.9654);'>Qatar</div>
<div class='t' style='left:418.20px;top:370.18px;font-size:10.5px;line-height:10.5px;color:#222;font-weight:400;transform:scaleX(0.9556);'>United Arab Emirates</div>
<div class='t' style='left:471.43px;top:407.88px;font-size:10.5px;line-height:10.5px;color:#222;font-weight:400;transform:scaleX(0.9710);'>Kuwait</div>
<div class='t' style='left:442.90px;top:457.88px;font-size:10.5px;line-height:10.5px;color:#222;font-weight:400;transform:scaleX(0.9267);'>Saudi Arabia</div>
<div class='t' style='left:456.60px;top:476.07px;font-size:10.5px;line-height:10.5px;color:#222;font-weight:400;transform:scaleX(0.9413);'>United States</div>
<div class='t' style='left:351.30px;top:513.88px;font-size:10.5px;line-height:10.5px;color:#222;font-weight:400;transform:scaleX(0.9000);'>Japan</div>
<div class='t' style='left:305.04px;top:536.38px;font-size:10.5px;line-height:10.5px;color:#222;font-weight:400;transform:scaleX(0.9576);'>Hong Kong, China</div>
<div class='t' style='left:370.87px;top:554.08px;font-size:10.5px;line-height:10.5px;color:#222;font-weight:400;transform:scaleX(0.9320);'>Brazil</div>
<div class='t' style='left:332.20px;top:564.08px;font-size:10.5px;line-height:10.5px;color:#222;font-weight:400;transform:scaleX(0.8786);'>China</div>
<div class='t' style='left:249.01px;top:583.28px;font-size:10.5px;line-height:10.5px;color:#222;font-weight:400;transform:scaleX(0.9865);'>Ethiopia</div>
<div class='t' style='left:493.00px;top:529.58px;font-size:10.5px;line-height:10.5px;color:#222;font-weight:400;transform:scaleX(0.8963);'>Czech Rep.</div>
<div class='t' style='left:432.83px;top:548.78px;font-size:10.5px;line-height:10.5px;color:#222;font-weight:400;transform:scaleX(0.9688);'>Mexico</div>
<div class='t' style='left:568.40px;top:547.38px;font-size:10.5px;line-height:10.5px;color:#222;font-weight:400;transform:scaleX(0.9963);'>Nauru</div>
<div class='t' style='left:506.70px;top:577.48px;font-size:10.5px;line-height:10.5px;color:#222;font-weight:400;transform:scaleX(0.9241);'>Tonga</div>
<div class='t' style='left:455.65px;top:585.08px;font-size:10.5px;line-height:10.5px;color:#222;font-weight:400;transform:scaleX(0.8516);'>Russia</div>
</body></html>
